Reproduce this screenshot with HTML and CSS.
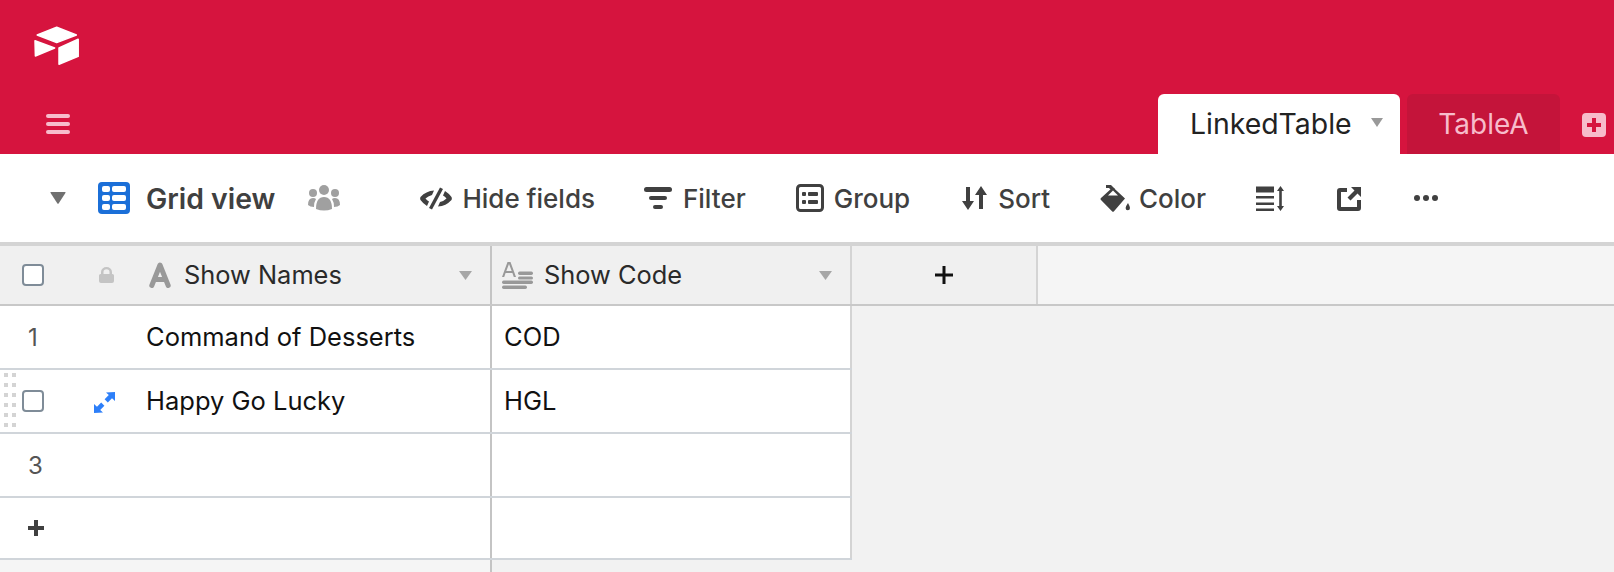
FILE: index.html
```html
<!DOCTYPE html>
<html lang="en">
<head>
<meta charset="utf-8">
<title>LinkedTable: Grid view</title>
<link rel="stylesheet" href="styles.css">
</head>
<body>
<header class="topbar">
  <div class="logo-row">
    <svg class="logo" width="46" height="40" viewBox="0 0 46 40"><g fill="#fff" stroke="#fff" stroke-width="1.5" stroke-linejoin="round"><path d="M3.200 9 22.700 1.200 42.400 9 22.700 16.600Z"/><path d="M1 14.800 20.600 22 1.400 30Z"/><path d="M25 22 44.200 13.200V30.400L25 38.200Z"/></g></svg>
  </div>
  <div class="tab-row">
    <svg class="burger" width="24" height="20" viewBox="0 0 24 20"><g fill="#f7bccb"><rect width="24" height="4" rx="2"/><rect y="8" width="24" height="4" rx="2"/><rect y="16" width="24" height="4" rx="2"/></g></svg>
    <div class="tabs">
      <div class="tab tab-active"><span>LinkedTable</span><svg class="tab-caret" width="12" height="9" viewBox="0 0 12 9"><path d="M0 0H12L6 9Z" fill="#999"/></svg></div>
      <div class="tab tab-other"><span>TableA</span></div>
      <svg class="tab-add" width="24" height="24" viewBox="0 0 24 24"><rect width="24" height="24" rx="4" fill="#f7bccb"/><path d="M10 5h4v5h5v4h-5v5h-4v-5H5v-4h5z" fill="#d6143e"/></svg>
    </div>
  </div>
</header>

<nav class="toolbar">
  <svg class="view-caret" width="16" height="12" viewBox="0 0 16 12"><path d="M1 0H15Q16 0 15.400 1L8.600 11.400Q8 12 7.400 11.400L.6 1Q0 0 1 0Z" fill="#707070"/></svg>
  <svg class="grid-icon" width="32" height="32" viewBox="0 0 32 32"><rect width="32" height="32" rx="4" fill="#1b6fd8"/><g fill="#fff"><rect x="4" y="4" width="8" height="6" rx="2"/><rect x="14" y="4" width="14" height="6" rx="2"/><rect x="4" y="13" width="8" height="6" rx="2"/><rect x="14" y="13" width="14" height="6" rx="2"/><rect x="4" y="22" width="8" height="6" rx="2"/><rect x="14" y="22" width="14" height="6" rx="2"/></g></svg>
  <span class="view-name">Grid view</span>
  <svg class="people" width="32" height="26" viewBox="0 0 32 26"><g fill="#a0a0a0"><circle cx="16" cy="5" r="5"/><circle cx="5" cy="8" r="4"/><circle cx="27" cy="8" r="4"/><path d="M8 24Q8 12 16 12T24 24Q16 27 8 24Z"/><path d="M0 20Q0 13 5 13 7 13 8 14 6 17 6 22 2 22 0 20Z"/><path d="M32 20Q32 13 27 13 25 13 24 14 26 17 26 22 30 22 32 20Z"/></g></svg>
  <div class="tool tool-hide">
    <svg width="32" height="23" viewBox="0 0 32 23"><g fill="#404040"><path d="M20 .5 23 2 12 22.500 9 21Z"/><path d="M14 3.500 12 8Q8 9 5.500 11.500 7 13.500 9 14.500L7 19Q3 16.500 .5 13-.2 11.500 .5 10 6 4 14 3.500Z"/><path d="M18 19.500 20 15Q24 14 26.500 11.500 25 9.500 23 8.500L25 4Q29 6.500 31.500 10 32.200 11.500 31.500 13 26 19 18 19.500Z"/></g></svg>
    <span>Hide fields</span>
  </div>
  <div class="tool tool-filter">
    <svg width="28" height="22" viewBox="0 0 28 22"><g fill="#404040"><rect width="28" height="5" rx="2.500"/><rect x="5" y="9" width="18" height="4" rx="2"/><rect x="9" y="18" width="10" height="4" rx="2"/></g></svg>
    <span>Filter</span>
  </div>
  <div class="tool tool-group">
    <svg width="28" height="28" viewBox="0 0 28 28"><rect x="1.500" y="1.500" width="25" height="25" rx="3" fill="none" stroke="#404040" stroke-width="3"/><g fill="#404040"><rect x="6" y="8" width="4" height="4" rx="1"/><rect x="12" y="8" width="10" height="4" rx="1"/><rect x="6" y="16" width="4" height="4" rx="1"/><rect x="12" y="16" width="10" height="4" rx="1"/></g></svg>
    <span>Group</span>
  </div>
  <div class="tool tool-sort">
    <svg width="25" height="24" viewBox="0 0 25 24"><g fill="#404040"><path d="M4 1h4v14h4L6 24 0 15h4z"/><path d="M17 23h4V9h4L19 0l-6 9h4z"/></g></svg>
    <span>Sort</span>
  </div>
  <div class="tool tool-color">
    <svg width="30" height="27" viewBox="0 0 30 27"><g fill="#404040"><path d="M1 13 11.700 3.200Q13 2.200 14 3.200L25 13.500 14 26.300Q13 27.300 12 26.300L1 15Q0 14 1 13Z"/><path d="M6 0h5l4 4-3 2-3-3H6z"/><path d="M28 18q2 3.500 2 5a2.200 2.200 0 0 1-4.400 0q0-1.500 2.400-5z"/></g><path d="M8 10.500h10l-5-5z" fill="#fff"/></svg>
    <span>Color</span>
  </div>
  <svg class="tool-rows" width="28" height="25" viewBox="0 0 28 25"><g fill="#404040"><rect y=".5" width="18" height="6"/><rect y="10" width="18" height="2.500"/><rect y="16.500" width="18" height="2.500"/><rect y="22.500" width="18" height="2.500"/><path d="M24.500 0 28 5h-2.200v15H28l-3.500 5-3.500-5h2.200V5H21z"/></g></svg>
  <svg class="tool-share" width="24" height="25" viewBox="0 0 24 25"><g fill="#404040"><path d="M3 2h7v4H4v15h16v-7h4v8q0 3-3 3H3q-3 0-3-3V5q0-3 3-3z"/><path d="M14 1h10v10l-3.500-3.500-7 7-3-3 7-7z"/></g></svg>
  <svg class="tool-more" width="24" height="6" viewBox="0 0 24 6"><g fill="#404040"><circle cx="3" cy="3" r="3"/><circle cx="12" cy="3" r="3"/><circle cx="21" cy="3" r="3"/></g></svg>
</nav>

<main class="grid">
  <div class="head-row">
    <div class="head-left">
      <span class="check"></span>
      <svg class="lock" width="15" height="16" viewBox="0 0 15 16"><path d="M2 7V5a5.500 5 0 0 1 11 0v2h.5q1.500 0 1.500 1.500V14q0 2-2 2H2q-2 0-2-2V8.500Q0 7 1.500 7zM4.500 7h6V5a3 2.800 0 0 0-6 0z" fill="#c4c4c4" fill-rule="evenodd"/></svg>
      <svg class="field-a" width="22" height="26" viewBox="0 0 22 26"><path d="M2.800 23.500 11 3 19.200 23.500M6.500 17.500H15.500" fill="none" stroke="#999" stroke-width="5" stroke-linecap="round" stroke-linejoin="round"/></svg>
      <span class="head-label label-names">Show Names</span>
      <svg class="head-caret" width="13" height="9" viewBox="0 0 13 9"><path d="M0 0H13L6.500 9Z" fill="#a6a6a6"/></svg>
    </div>
    <div class="head-col">
      <svg class="field-long" width="31" height="27" viewBox="0 0 31 27"><g fill="#999"><path d="M5.500 0h3l5.500 15h-2.200l-1.400-4H3.600l-1.400 4H0zM4.300 9h5.400L7 2z" fill-rule="evenodd"/><rect x="16" y="9.500" width="15" height="3.500" rx="1.700"/><rect x="16" y="14.500" width="15" height="3" rx="1.500"/><rect y="18.500" width="31" height="3.500" rx="1.700"/><rect y="23.500" width="25" height="3.500" rx="1.700"/></g></svg>
      <span class="head-label label-code">Show Code</span>
      <svg class="head-caret" width="13" height="9" viewBox="0 0 13 9"><path d="M0 0H13L6.500 9Z" fill="#a6a6a6"/></svg>
    </div>
    <div class="head-add">
      <svg width="18" height="18" viewBox="0 0 18 18"><path d="M7.500 0h3v7.500H18v3h-7.500V18h-3v-7.500H0v-3h7.500z" fill="#111"/></svg>
    </div>
  </div>

  <div class="row">
    <div class="cell-left"><span class="row-num">1</span><span class="cell-text">Command of Desserts</span></div>
    <div class="cell-col">COD</div>
  </div>
  <div class="row">
    <div class="cell-left">
      <span class="grip"><i></i><i></i><i></i><i></i><i></i><i></i><i></i><i></i><i></i><i></i><i></i><i></i></span>
      <span class="row-tools">
        <span class="check check-row"></span>
        <svg class="expand" width="21" height="21" viewBox="0 0 21 21"><g fill="#2d7ff9"><path d="M12 .5 21 0v9l-3-2.800-4.200 4.200-3.200-3.200 4.200-4.200z"/><path d="M9 20.500 0 21v-9l3 2.800 4.200-4.200 3.200 3.200-4.200 4.200z"/></g></svg>
      </span>
      <span class="cell-text">Happy Go Lucky</span>
    </div>
    <div class="cell-col">HGL</div>
  </div>
  <div class="row">
    <div class="cell-left"><span class="row-num">3</span></div>
    <div class="cell-col"></div>
  </div>
  <div class="row row-add">
    <div class="cell-left"><svg class="add-row" width="16" height="16" viewBox="0 0 16 16"><path d="M6 0h4v6h6v4h-6v6H6v-6H0V6h6z" fill="#404040"/></svg></div>
    <div class="cell-col"></div>
  </div>
  <div class="foot"><div class="foot-left"></div></div>
</main>
</body>
</html>
```
FILE: styles.css
```css
* { box-sizing: border-box; }
html, body { margin: 0; padding: 0; }
body {
  width: 1614px;
  height: 572px;
  overflow: hidden;
  background: #f2f2f2;
  font-family: Inter, "Liberation Sans", sans-serif;
  font-size: 26px;
  color: #111;
}
svg { display: block; flex: none; }

.topbar {
  height: 154px;
  background: #d6143e;
  display: flex;
  flex-direction: column;
}
.logo-row { height: 94px; padding: 26px 0 0 34px; }
.tab-row { height: 60px; display: flex; justify-content: space-between; }
.burger { margin: 20px 0 0 46px; }
.tabs { display: flex; }
.tab {
  display: flex;
  align-items: center;
  border-radius: 6px 6px 0 0;
  padding-bottom: 1px;
  font-size: 28px;
}
.tab-active {
  width: 242px;
  background: #fff;
  padding-left: 32px;
  color: #222;
  font-size: 28.4px;
}
.tab-caret { margin: -2px 0 0 19px; }
.tab-other {
  width: 153px;
  margin-left: 7px;
  justify-content: center;
  background: #c4143a;
  color: #f7bccb;
}
.tab-add { margin: 19px 8px 0 22px; }

.toolbar {
  height: 88px;
  background: #fff;
  display: flex;
  align-items: center;
  color: #404040;
  padding-left: 50px;
}
.view-caret { margin-right: 32px; }
.view-name { margin-left: 16px; font-size: 28.4px; font-weight: 600; }
.people { margin-left: 33px; }
.tool { display: flex; align-items: center; gap: 11px; font-weight: 500; }
.tool-hide { margin-left: 80px; gap: 10px; }
.tool-filter { margin-left: 49px; }
.tool-group { margin-left: 50px; gap: 10px; }
.tool-sort { margin-left: 52px; }
.tool-color { margin-left: 50px; gap: 9px; }
.tool-rows { margin-left: 50px; }
.tool-share { margin-left: 53px; }
.tool-more { margin-left: 53px; }

.grid { height: 330px; display: flex; flex-direction: column; }
.head-row {
  height: 64px;
  display: flex;
  background: #f5f5f5;
  border-top: 4px solid #d4d4d4;
  border-bottom: 2px solid #c8c8c8;
}
.head-left, .head-col, .head-add { background: #f0f0f0; display: flex; align-items: center; }
.head-left { width: 492px; border-right: 2px solid #c4c4c4; padding: 0 18px 0 22px; }
.head-col { width: 360px; border-right: 2px solid #d4d4d4; padding: 0 18px 0 10px; }
.head-add { width: 186px; border-right: 2px solid #d4d4d4; justify-content: center; }
.head-label { font-size: 25.4px; color: #2a2a2a; white-space: nowrap; padding-bottom: 2px; }
.label-names { margin-left: 13px; }
.label-code { margin-left: 11px; }
.head-caret { margin-left: auto; }

.check {
  display: block;
  flex: none;
  width: 22px;
  height: 22px;
  background: #fff;
  border: 2px solid #7f8c98;
  border-radius: 4px;
}
.lock { margin-left: 55px; }
.field-a { margin-left: 35px; }

.row { height: 64px; width: 852px; display: flex; background: #fff; border-bottom: 2px solid #d0d5da; }
.row-add { height: 62px; }
.cell-left {
  position: relative;
  width: 492px;
  border-right: 2px solid #c4c4c4;
  display: flex;
  align-items: center;
}
.cell-col { width: 360px; border-right: 2px solid #d4d4d4; padding-left: 12px; }
.cell-col, .cell-text { line-height: 62px; color: #111; font-size: 25.5px; }
.row-num { width: 146px; padding-left: 28px; font-size: 24px; color: #555; }
.row-tools { width: 146px; display: flex; align-items: center; padding: 0 0 0 22px; }
.expand { margin: 2px 0 0 50px; }
.add-row { margin-left: 28px; }
.grip {
  position: absolute;
  left: 4px;
  top: 3px;
  display: grid;
  grid-template-columns: 4px 4px;
  grid-auto-rows: 4px;
  gap: 6px 4px;
}
.grip i { background: #d4d4d4; }

.foot { flex: 1; }
.foot-left { width: 492px; height: 100%; background: #f5f5f5; border-right: 2px solid #c4c4c4; }
```
